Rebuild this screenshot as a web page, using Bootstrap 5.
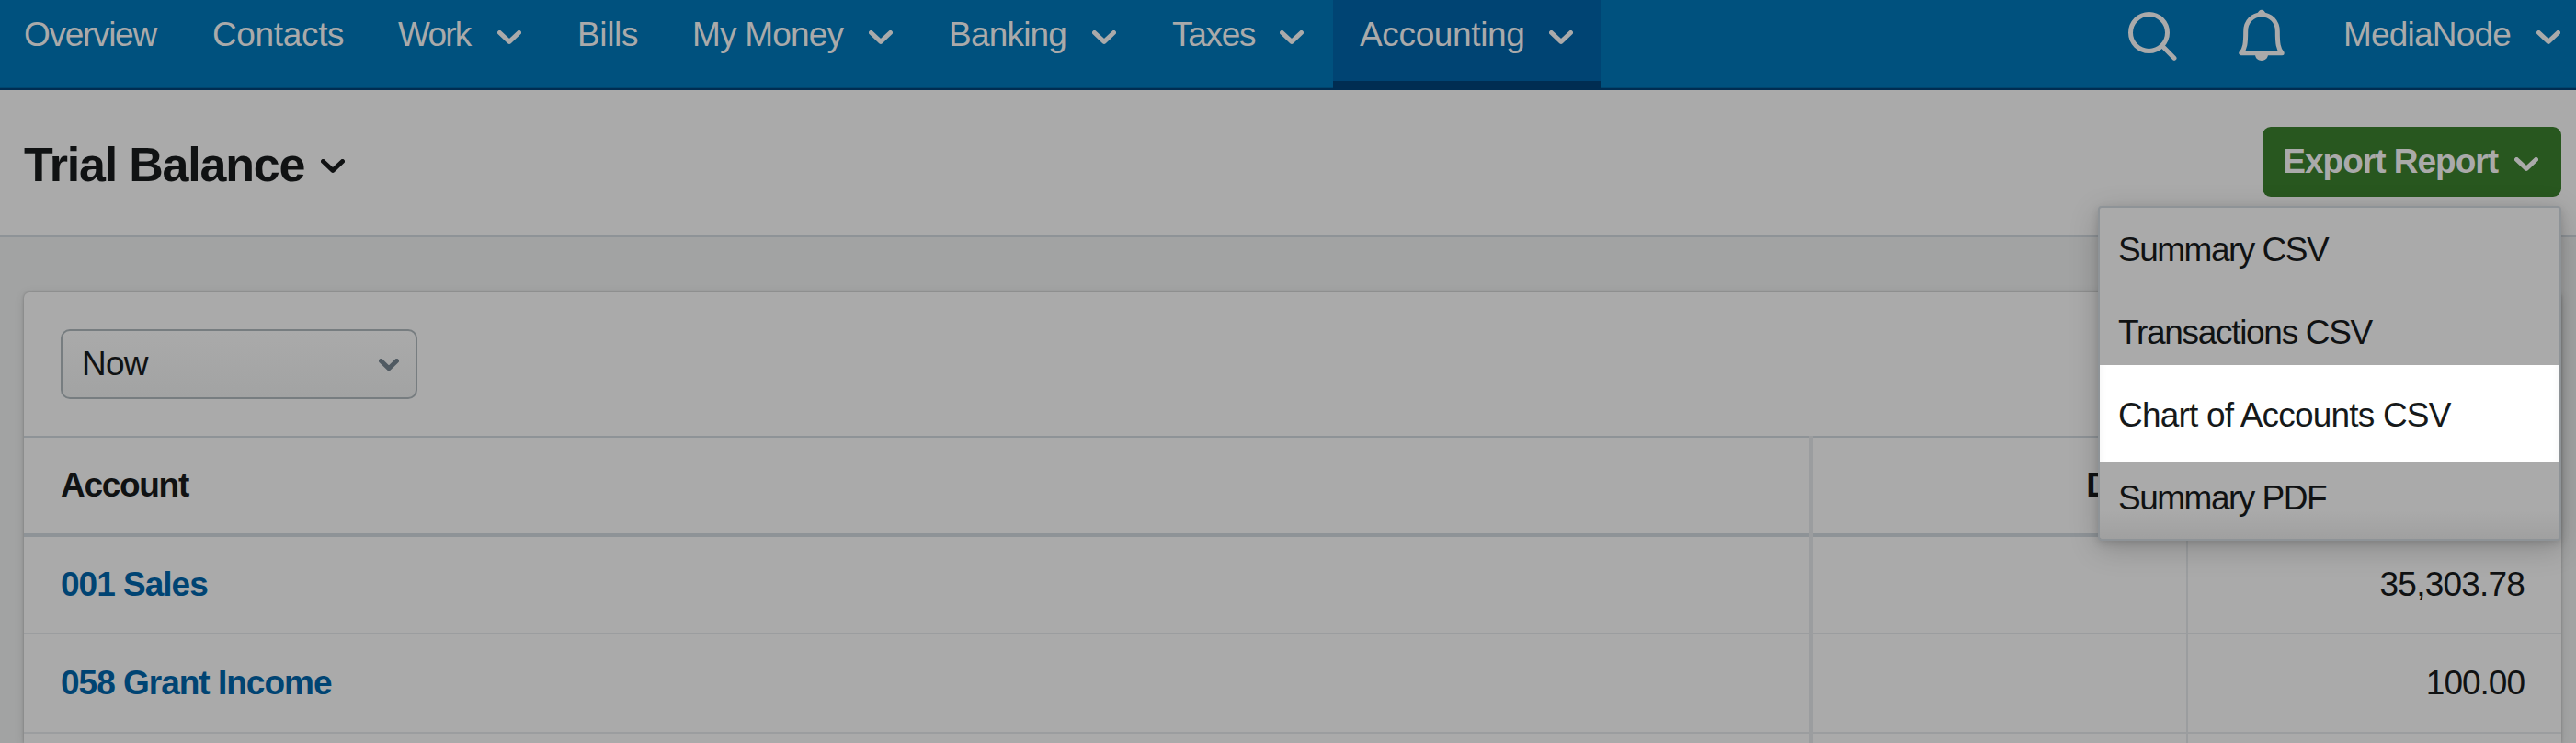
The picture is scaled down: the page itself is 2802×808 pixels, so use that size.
<!DOCTYPE html>
<html lang="en">
<head>
<meta charset="utf-8">
<meta name="viewport" content="width=device-width, initial-scale=1">
<title>Trial Balance</title>
<link href="https://cdn.jsdelivr.net/npm/bootstrap@5.3.0/dist/css/bootstrap.min.css" rel="stylesheet">
<style>
body{font-family:"Liberation Sans",Arial,sans-serif;font-size:37px;line-height:44px;color:#101213;background:#a2a3a3;height:808px;overflow:hidden}
svg{display:block;flex:none}
.chev{width:26px;height:15px;fill:none;stroke:currentColor;stroke-width:5;stroke-linecap:round;stroke-linejoin:round}
/* tracking steps */
.t3{letter-spacing:-.35px}.t7{letter-spacing:-.8px}.t10{letter-spacing:-1px}.t13{letter-spacing:-1.3px}.t15{letter-spacing:-1.5px}.t18{letter-spacing:-1.8px}

.topnav{height:98px;background:#00517e;box-shadow:inset 0 -2px #002d52,inset 0 -3px #00466f;color:#aaa;padding-right:17px}
.main-links{display:grid;grid-template-columns:205px 202px 195px 125px 279px 243px 204px 292px;margin-left:-3px}
.topnav .nav-link{color:inherit;padding:16px 32px 0 29px;height:98px;display:flex;align-items:flex-start;justify-content:space-between;white-space:nowrap}
.topnav .chev{margin-top:17px}
.topnav .nav-link.active{background:#004473;border-bottom:10px solid #002d52;padding-right:31px}
.nav-tools .nav-link{padding:16px 0 0;gap:28px}
.search-ico{margin:13px 67px 0 0}
.bell-ico{margin:10px 64px 0 0}

.page-head{height:160px;background:#aaa;border-bottom:2px solid #8e9397;padding:0 16px 2px 26px}
.page-head h1{font-size:52px;line-height:60px;font-weight:700;letter-spacing:-1.2px;padding-top:5px}
.title-toggle{gap:18px}
.title-toggle .chev{margin-top:9px}
.btn-export,.btn-export:hover{height:76px;background:#28571f;color:#aaa;border:0;border-radius:9px;font-size:37px;font-weight:700;line-height:44px;padding:0 25px 0 22px;gap:18px}
.btn-export .chev{margin-top:5px}

.export-menu{width:504px;height:364px;top:86px;right:0;z-index:5;background:#aaa;border:2px solid #8e9397;border-radius:4px;box-shadow:0 8px 32px rgba(0,0,0,.2),0 3px 8px rgba(0,0,0,.12)}
.export-menu a{height:90px;padding:2px 20px 0;color:inherit;text-decoration:none;white-space:nowrap}
.export-menu a.spot{height:105px;margin:-9px 0 -6px;padding-top:4px;background:#fff;color:#16191a;box-shadow:inset 10px 0 10px -10px rgba(0,0,0,.06),inset -10px 0 10px -10px rgba(0,0,0,.06)}
.export-menu a:last-child{background:linear-gradient(transparent 65%,rgba(0,0,0,.06))}

.report{margin:60px 16px 0 26px;background:#aaa;border-radius:6px 6px 0 0;box-shadow:0 0 3px rgba(0,0,0,.25),0 2px 12px rgba(0,0,0,.1);height:490px;overflow:clip;overflow-clip-margin:12px}
.filter{height:156px;padding:40px}
.picker{width:388px;height:76px;border:2px solid #777d80;border-radius:10px;background:linear-gradient(#aaa,#a2a3a3);padding:0 18px 0 21px}
.picker .chev{width:22px;height:14px;margin-top:2px;color:#505a62}
.ledger{display:grid;grid-template-columns:1942px 4px 406px 2px 406px;grid-template-rows:110px 106px 108px 10px}
.ledger .cell{padding:0 40px 1px;border-bottom:2px solid #9b9d9f}
.ledger .hd{border-top:2px solid #8e9397;border-bottom:4px solid #8e9397;font-weight:700}
.ledger .hd-debit{padding-right:18px}
.vline{grid-row:1/5;background:#9b9d9f}
.v1{grid-column:2}.v2{grid-column:4}
.c1{grid-column:1}.c2{grid-column:3}.c3{grid-column:5}
.r1{grid-row:1}.r2{grid-row:2}.r3{grid-row:3}
.ledger a{color:#004473;font-weight:700;text-decoration:none}
</style>
</head>
<body>
<nav class="topnav d-flex justify-content-between">
  <div class="main-links">
    <a class="nav-link t13" href="#">Overview</a>
    <a class="nav-link t3" href="#">Contacts</a>
    <a class="nav-link t18" href="#">Work<svg class="chev" viewBox="0 0 26 15"><path d="M2.5 2.5L13 12.3 23.5 2.5"/></svg></a>
    <a class="nav-link t3" href="#">Bills</a>
    <a class="nav-link t7" href="#">My Money<svg class="chev" viewBox="0 0 26 15"><path d="M2.5 2.5L13 12.3 23.5 2.5"/></svg></a>
    <a class="nav-link t7" href="#">Banking<svg class="chev" viewBox="0 0 26 15"><path d="M2.5 2.5L13 12.3 23.5 2.5"/></svg></a>
    <a class="nav-link t13" href="#">Taxes<svg class="chev" viewBox="0 0 26 15"><path d="M2.5 2.5L13 12.3 23.5 2.5"/></svg></a>
    <a class="nav-link active t3" href="#">Accounting<svg class="chev" viewBox="0 0 26 15"><path d="M2.5 2.5L13 12.3 23.5 2.5"/></svg></a>
  </div>
  <div class="nav-tools d-flex">
    <svg class="search-ico" width="53" height="53" viewBox="0 0 53 53" fill="none" stroke="currentColor" stroke-width="5" stroke-linecap="round"><circle cx="22.5" cy="22.5" r="20"/><path d="M37 37l13 13.2"/></svg>
    <svg class="bell-ico" width="50" height="57" viewBox="0 0 50 57" fill="none" stroke="currentColor" stroke-width="5" stroke-linejoin="round"><path d="M25 6C15 6 7.7 13.5 7.7 24C7.7 37 7 43 2.8 47.7H47.2C43 43 42.300 37 42.300 24C42.300 13.500 35 6 25 6Z"/><path d="M20.500 5.500C21.500-.8 28.500-.8 29.500 5.500ZM18 49.500C18.500 58 31.500 58 32 49.500Z" fill="currentColor" stroke="none"/></svg>
    <a class="nav-link t7" href="#">MediaNode<svg class="chev" viewBox="0 0 26 15"><path d="M2.5 2.5L13 12.3 23.5 2.5"/></svg></a>
  </div>
</nav>

<header class="page-head d-flex align-items-center justify-content-between">
  <div class="title-toggle d-flex align-items-center">
    <h1 class="m-0">Trial Balance</h1>
    <svg class="chev" viewBox="0 0 26 15"><path d="M2.5 2.5L13 12.3 23.5 2.5"/></svg>
  </div>
  <div class="position-relative">
    <button class="btn btn-export t10 d-flex align-items-center" type="button">Export Report<svg class="chev" viewBox="0 0 26 15"><path d="M2.5 2.5L13 12.3 23.5 2.5"/></svg></button>
    <div class="export-menu position-absolute">
      <a class="t15 d-flex align-items-center" href="#">Summary CSV</a>
      <a class="t13 d-flex align-items-center" href="#">Transactions CSV</a>
      <a class="spot t7 d-flex align-items-center" href="#">Chart of Accounts CSV</a>
      <a class="t15 d-flex align-items-center" href="#">Summary PDF</a>
    </div>
  </div>
</header>

<main class="report">
  <div class="filter">
    <div class="picker d-flex align-items-center justify-content-between"><span class="t7">Now</span><svg class="chev" viewBox="0 0 22 14"><path d="M2.5 2.5L11 10.8 19.5 2.5"/></svg></div>
  </div>
  <div class="ledger">
    <div class="vline v1"></div><div class="vline v2"></div>
    <div class="cell hd c1 r1 d-flex align-items-center t13">Account</div>
    <div class="cell hd hd-debit c2 r1 d-flex align-items-center justify-content-end t3">Debit</div>
    <div class="cell hd c3 r1"></div>
    <div class="cell c1 r2 d-flex align-items-center"><a class="t10" href="#">001 Sales</a></div>
    <div class="cell c2 r2"></div>
    <div class="cell c3 r2 d-flex align-items-center justify-content-end t7">35,303.78</div>
    <div class="cell c1 r3 d-flex align-items-center"><a class="t10" href="#">058 Grant Income</a></div>
    <div class="cell c2 r3"></div>
    <div class="cell c3 r3 d-flex align-items-center justify-content-end t10">100.00</div>
  </div>
</main>
<script src="https://cdn.jsdelivr.net/npm/bootstrap@5.3.0/dist/js/bootstrap.bundle.min.js"></script>
</body>
</html>
